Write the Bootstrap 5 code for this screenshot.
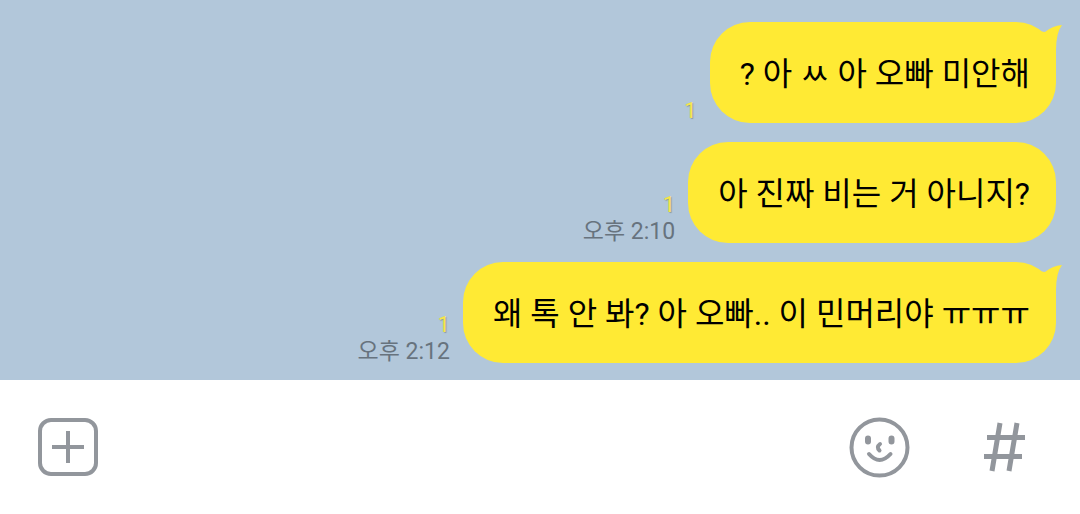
<!DOCTYPE html>
<html lang="ko">
<head>
<meta charset="utf-8">
<meta name="viewport" content="width=device-width, initial-scale=1">
<title>채팅</title>
<link href="https://cdn.jsdelivr.net/npm/bootstrap@5.3.0/dist/css/bootstrap.min.css" rel="stylesheet">
<style>
  body { font-family: Roboto, "Noto Sans CJK KR", sans-serif; background: #fff; }
  .chat-log { background: #b2c7da; gap: 19px; padding: 22px 24px 17px; }
  .message { gap: 13px; }
  .bubble { background: #ffea34; color: #000; border-radius: 40px; padding: 28px 26px 25px 30px; font-size: 32px; line-height: 48px; }
  .bubble-tail { right: -6px; top: 0; width: 24px; height: 50px; fill: #ffea34; }
  .meta { color: #67737e; font-size: 23px; line-height: 23px; }
  .unread { color: #f7e64a; font-size: 22px; line-height: 24px; text-shadow: 1px 1px 1px rgba(90, 100, 80, .45); }
  .sent-at { margin-top: 3px; }
  .composer { padding: 36px 36px; }
  .composer .btn { color: #92969c; line-height: 0; }
  .composer svg { width: 62px; height: 62px; fill: none; stroke: currentColor; }
  .composer .form-control { box-shadow: none; background: transparent; font-size: 32px; }
  .tools { gap: 62px; padding-right: 10px; }
</style>
<script src="https://cdn.jsdelivr.net/npm/bootstrap@5.3.0/dist/js/bootstrap.bundle.min.js" defer></script>
</head>
<body class="d-flex flex-column min-vh-100">
<main class="chat-log d-flex flex-column">
  <div class="message d-flex justify-content-end align-items-end">
    <div class="meta text-end"><div class="unread">1</div></div>
    <div class="bubble position-relative">? 아 ㅆ 아 오빠 미안해
      <svg class="bubble-tail position-absolute" viewBox="0 0 24 50" aria-hidden="true"><path d="M0 9 L7 10 Q14 4 24 3 Q18 11 18 28 V50 H0Z"/></svg>
    </div>
  </div>
  <div class="message d-flex justify-content-end align-items-end">
    <div class="meta text-end"><div class="unread">1</div><div class="sent-at">오후 2:10</div></div>
    <div class="bubble">아 진짜 비는 거 아니지?</div>
  </div>
  <div class="message d-flex justify-content-end align-items-end">
    <div class="meta text-end"><div class="unread">1</div><div class="sent-at">오후 2:12</div></div>
    <div class="bubble position-relative">왜 톡 안 봐? 아 오빠.. 이 민머리야 ㅠㅠㅠ
      <svg class="bubble-tail position-absolute" viewBox="0 0 24 50" aria-hidden="true"><path d="M0 9 L7 10 Q14 4 24 3 Q18 11 18 28 V50 H0Z"/></svg>
    </div>
  </div>
</main>
<form class="composer d-flex align-items-center">
  <button type="button" class="btn p-0 border-0" aria-label="첨부">
    <svg viewBox="0 0 62 62" stroke-width="4"><rect x="4" y="4" width="56" height="54" rx="11"/><path d="M32 15V47M16 31H48"/></svg>
  </button>
  <input type="text" class="form-control border-0 flex-fill" aria-label="메시지">
  <div class="tools d-flex">
    <button type="button" class="btn p-0 border-0" aria-label="이모티콘">
      <svg viewBox="0 0 62 62" stroke-width="4" stroke-linecap="round"><circle cx="31.500" cy="31.500" r="28"/><path d="M20 22.500V25.500M43.500 22.500V25.500" stroke-width="6"/><path d="M32 28Q28 31 31.500 34.500" stroke-width="4"/><path d="M21 38Q31.500 50 42.500 38"/></svg>
    </button>
    <button type="button" class="btn p-0 border-0" aria-label="샵검색">
      <svg viewBox="0 0 62 62" stroke-width="5"><path d="M28 7L20 55M45 7L37 55M15 21.500H53M12 40.500H50"/></svg>
    </button>
  </div>
</form>
</body>
</html>
